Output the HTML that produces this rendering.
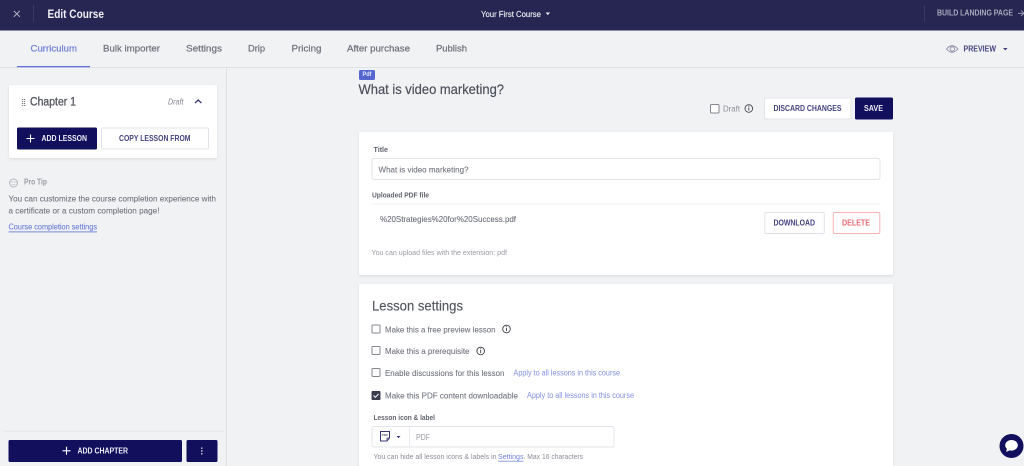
<!DOCTYPE html>
<html><head><meta charset="utf-8"><title>Edit Course</title>
<style>
html,body{margin:0;padding:0;width:1024px;height:466px;overflow:hidden;background:#f1f2f4}
svg{display:block;font-family:"Liberation Sans",sans-serif}
text{dominant-baseline:central}
.b{font-weight:700}
.tab{font-size:9.5px;fill:#6c6e7a;stroke:#6c6e7a;stroke-width:.2px}
.body{font-size:8.5px;fill:#73757f;stroke:#73757f;stroke-width:.1px}
.btn{font-size:8px;font-weight:700;fill:#45437f}
.w{font-size:8px;font-weight:700;fill:#eeeef5}
.lnk{font-size:8px;fill:#8390e2}
.cb{fill:#fff;stroke:#85868f;stroke-width:1}
</style></head><body>
<svg width="1024" height="466" viewBox="0 0 1024 466" xmlns="http://www.w3.org/2000/svg">
<defs>
<filter id="s" x="-5%" y="-5%" width="110%" height="115%"><feDropShadow dx="0" dy="1" stdDeviation="1.2" flood-color="#000" flood-opacity=".1"/></filter>
</defs>
<rect width="1024" height="466" fill="#f1f2f4"/>
<!-- header -->
<rect width="1024" height="30.5" fill="#272552"/>
<path d="M13.800 10.800l6 6M19.800 10.800l-6 6" stroke="#b9b9c8" stroke-width="1" fill="none"/>
<rect x="33" y="5" width="1" height="17" fill="#3a3863"/>
<text x="47.500" y="14" class="b" font-size="12" fill="#f0f0f5" textLength="56.500" lengthAdjust="spacingAndGlyphs">Edit Course</text>
<text x="481" y="14" font-size="8.500" fill="#ecedf3" stroke="#ecedf3" stroke-width=".15" textLength="60" lengthAdjust="spacingAndGlyphs">Your First Course</text>
<path d="M545.500 12.500h4.600l-2.300 2.600z" fill="#e8e8f0"/>
<rect x="924" y="5" width="1" height="17" fill="#3a3863"/>
<text x="937" y="13" class="b" font-size="8" fill="#aaaabd" textLength="76" lengthAdjust="spacingAndGlyphs">BUILD LANDING PAGE</text>
<path d="M1018 13.300h6M1021 10.500l3 2.800-3 2.800" stroke="#aaaabd" stroke-width=".8" fill="none"/>
<!-- tabs -->
<rect y="67" width="1024" height="1" fill="#e0e1e5"/>
<rect x="17" y="66" width="73" height="1.300" fill="#6274dc"/>
<text x="30.500" y="49" class="tab" style="fill:#6d7cd8;stroke:#6d7cd8" textLength="46.500" lengthAdjust="spacingAndGlyphs">Curriculum</text>
<text x="103" y="49" class="tab" textLength="57" lengthAdjust="spacingAndGlyphs">Bulk importer</text>
<text x="186" y="49" class="tab" textLength="36" lengthAdjust="spacingAndGlyphs">Settings</text>
<text x="248" y="49" class="tab" textLength="17" lengthAdjust="spacingAndGlyphs">Drip</text>
<text x="291.500" y="49" class="tab" textLength="30" lengthAdjust="spacingAndGlyphs">Pricing</text>
<text x="347" y="49" class="tab" textLength="63" lengthAdjust="spacingAndGlyphs">After purchase</text>
<text x="436" y="49" class="tab" textLength="31" lengthAdjust="spacingAndGlyphs">Publish</text>
<path d="M946.500 49q5.500-6.500 11.500 0q-6 6.500-11.500 0z" fill="none" stroke="#8a8ba8" stroke-width=".9"/>
<circle cx="952.300" cy="49" r="2.200" fill="none" stroke="#8a8ba8" stroke-width=".9"/>
<text x="963.500" y="49" class="btn" textLength="32.500" lengthAdjust="spacingAndGlyphs">PREVIEW</text>
<path d="M1003 48h4.600l-2.300 2.400z" fill="#3f3d7a"/>
<!-- sidebar -->
<rect x="226" y="67" width="1" height="399" fill="#e0e1e5"/>
<rect x="9" y="85" width="208" height="73" rx="1.500" fill="#fff" filter="url(#s)"/>
<path d="M22.500 99v.9M24.600 99v.9M22.500 101v.9M24.600 101v.9M22.500 103v.9M24.600 103v.9M22.500 105v.9M24.600 105v.9" stroke="#666" stroke-width="1.300"/>
<text x="30" y="102.500" font-size="11.500" fill="#55575f" stroke="#55575f" stroke-width=".3" textLength="46" lengthAdjust="spacingAndGlyphs">Chapter 1</text>
<text x="168" y="102" font-size="8" font-style="italic" fill="#85868f" textLength="15.500" lengthAdjust="spacingAndGlyphs">Draft</text>
<path d="M195 103l3.200-3 3.200 3" stroke="#3a3878" stroke-width="1.300" fill="none"/>
<rect x="17" y="127.500" width="80" height="22" rx="1.500" fill="#120f5c"/>
<path d="M26.500 138.500h8M30.500 134.500v8" stroke="#fff" stroke-width="1.100"/>
<text x="41.500" y="138.500" class="w" textLength="45.500" lengthAdjust="spacingAndGlyphs">ADD LESSON</text>
<rect x="101.500" y="128" width="107" height="21" rx="1.500" fill="#fff" stroke="#e2e3ea"/>
<text x="119" y="138.500" class="btn" textLength="71.500" lengthAdjust="spacingAndGlyphs">COPY LESSON FROM</text>
<circle cx="13.500" cy="183" r="4" fill="none" stroke="#b5b6bc" stroke-width="1"/>
<path d="M10 182h7M11.500 184.500h4" stroke="#c5c6cb" stroke-width=".8"/>
<text x="24" y="182" class="b" font-size="8" fill="#9a9ba2" textLength="23" lengthAdjust="spacingAndGlyphs">Pro Tip</text>
<text x="8.500" y="198.500" class="body" textLength="207.500" lengthAdjust="spacingAndGlyphs">You can customize the course completion experience with</text>
<text x="8.500" y="210.500" class="body" textLength="151" lengthAdjust="spacingAndGlyphs">a certificate or a custom completion page!</text>
<text x="8.500" y="227" class="lnk" style="text-decoration:underline;fill:#6f80d8;stroke:#6f80d8;stroke-width:.12px" textLength="88.500" lengthAdjust="spacingAndGlyphs">Course completion settings</text>
<rect x="4" y="430.500" width="220" height="1.500" fill="#e9eaec"/>
<rect x="8.500" y="440" width="173.500" height="22" rx="1.500" fill="#120f5c"/>
<path d="M62.500 450.800h8M66.500 446.800v8" stroke="#fff" stroke-width="1.100"/>
<text x="77.500" y="450.800" class="w" textLength="50.500" lengthAdjust="spacingAndGlyphs">ADD CHAPTER</text>
<rect x="186.500" y="440" width="31" height="22" rx="1.500" fill="#120f5c"/>
<path d="M201.800 447.500v1.300M201.800 450.300v1.300M201.800 453.100v1.300" stroke="#fff" stroke-width="1.300"/>
<!-- title -->
<rect x="359" y="70" width="16" height="10" rx="1.500" fill="#5567cf"/>
<text x="362.500" y="75" class="b" font-size="6" fill="#e8eafa" textLength="9" lengthAdjust="spacingAndGlyphs">Pdf</text>
<text x="358.500" y="89" font-size="14" fill="#4c4e5a" stroke="#4c4e5a" stroke-width=".2" textLength="145.500" lengthAdjust="spacingAndGlyphs">What is video marketing?</text>
<rect x="710.500" y="104.500" width="8.500" height="8.500" rx="1" class="cb"/>
<text x="723" y="108.500" font-size="8.500" fill="#8c8d96" textLength="17" lengthAdjust="spacingAndGlyphs">Draft</text>
<g fill="none" stroke="#44454d"><circle cx="748.800" cy="108.500" r="3.800" stroke-width=".9"/><path d="M748.800 107.500v3M748.800 105.800v1" stroke-width=".9"/></g>
<rect x="764.500" y="98" width="86.500" height="21" rx="1.500" fill="#fff" stroke="#e4e5ea"/>
<text x="773.500" y="108.500" class="btn" textLength="68" lengthAdjust="spacingAndGlyphs">DISCARD CHANGES</text>
<rect x="855" y="97.500" width="38" height="22" rx="1.500" fill="#120f5c"/>
<text x="864" y="108.500" class="w" textLength="19" lengthAdjust="spacingAndGlyphs">SAVE</text>
<!-- card 1 -->
<rect x="359" y="132" width="534" height="143" rx="1.500" fill="#fff" filter="url(#s)"/>
<text x="373.500" y="149.500" class="b" font-size="7.500" fill="#62646e" textLength="14.500" lengthAdjust="spacingAndGlyphs">Title</text>
<rect x="372" y="158.500" width="508" height="21" rx="2" fill="#fff" stroke="#e3e4ea"/>
<text x="378.500" y="169.500" class="body" textLength="90" lengthAdjust="spacingAndGlyphs">What is video marketing?</text>
<text x="372" y="195" class="b" font-size="7.500" fill="#62646e" textLength="57" lengthAdjust="spacingAndGlyphs">Uploaded PDF file</text>
<rect x="372" y="203.500" width="508" height="1" fill="#f0f1f3"/>
<text x="380" y="219" class="body" style="fill:#6a6c76" textLength="136" lengthAdjust="spacingAndGlyphs">%20Strategies%20for%20Success.pdf</text>
<rect x="764.800" y="212.500" width="59.500" height="21" rx="1.500" fill="#fff" stroke="#e2e3ea"/>
<text x="773.500" y="223" class="btn" textLength="41.500" lengthAdjust="spacingAndGlyphs">DOWNLOAD</text>
<rect x="833.300" y="212.500" width="46.500" height="21" rx="1.500" fill="#fff" stroke="#f5b5b5"/>
<text x="842" y="223" class="btn" style="fill:#e8666e" textLength="28" lengthAdjust="spacingAndGlyphs">DELETE</text>
<text x="371.500" y="252.500" font-size="7.500" fill="#9a9ba3" textLength="135.500" lengthAdjust="spacingAndGlyphs">You can upload files with the extension: pdf</text>
<!-- card 2 -->
<rect x="359" y="284" width="534" height="190" rx="1.500" fill="#fff" filter="url(#s)"/>
<text x="372" y="305.500" font-size="14" fill="#55575f" stroke="#55575f" stroke-width=".15" textLength="91" lengthAdjust="spacingAndGlyphs">Lesson settings</text>
<rect x="372" y="325" width="8" height="8" rx="1" class="cb"/>
<text x="385" y="329.500" class="body" textLength="110.500" lengthAdjust="spacingAndGlyphs">Make this a free preview lesson</text>
<g fill="none" stroke="#3b3c44" stroke-width=".9"><circle cx="506.500" cy="329" r="3.800"/><path d="M506.500 328v3M506.500 326.300v1"/></g>
<rect x="372" y="346.500" width="8" height="8" rx="1" class="cb"/>
<text x="385" y="351" class="body" textLength="84.500" lengthAdjust="spacingAndGlyphs">Make this a prerequisite</text>
<g fill="none" stroke="#3b3c44" stroke-width=".9"><circle cx="480.700" cy="351" r="3.800"/><path d="M480.700 350v3M480.700 348.300v1"/></g>
<rect x="372" y="368.500" width="8" height="8" rx="1" class="cb"/>
<text x="385" y="373" class="body" textLength="119.500" lengthAdjust="spacingAndGlyphs">Enable discussions for this lesson</text>
<text x="513.500" y="373" class="lnk" textLength="106.500" lengthAdjust="spacingAndGlyphs">Apply to all lessons in this course</text>
<rect x="371.500" y="391" width="9" height="9" rx="1" fill="#3b3d4e"/>
<path d="M373.500 395.500l1.800 1.800 3.300-3.300" stroke="#fff" stroke-width="1" fill="none"/>
<text x="385" y="395.500" class="body" textLength="133" lengthAdjust="spacingAndGlyphs">Make this PDF content downloadable</text>
<text x="527" y="395.500" class="lnk" textLength="107" lengthAdjust="spacingAndGlyphs">Apply to all lessons in this course</text>
<text x="373.500" y="417.500" class="b" font-size="7.500" fill="#62646e" textLength="61.500" lengthAdjust="spacingAndGlyphs">Lesson icon &amp; label</text>
<rect x="372" y="426.500" width="242" height="20.500" rx="2" fill="#fff" stroke="#e3e4ea"/>
<rect x="409" y="427" width="1" height="20" fill="#e8e9ee"/>
<path d="M380.500 431.500h9v6.500l-2.500 3h-6.500z" fill="none" stroke="#3a3878" stroke-width="1"/>
<path d="M387 441v-3h2.500" fill="none" stroke="#3a3878" stroke-width=".8"/>
<text x="381.700" y="435" class="b" font-size="3" fill="#55557f" textLength="6.600" lengthAdjust="spacingAndGlyphs">PDF</text>
<path d="M396.500 436h4l-2 2.300z" fill="#3a3878"/>
<text x="416" y="437" class="body" style="fill:#9a9ba3;stroke:none" textLength="14" lengthAdjust="spacingAndGlyphs">PDF</text>
<text x="373.500" y="456.300" font-size="7.500" fill="#8c8d96" textLength="123" lengthAdjust="spacingAndGlyphs">You can hide all lesson icons &amp; labels in</text>
<text x="498" y="456.300" font-size="7.500" fill="#6f80d8" style="text-decoration:underline" textLength="25.500" lengthAdjust="spacingAndGlyphs">Settings</text>
<text x="523.500" y="456.300" font-size="7.500" fill="#8c8d96" textLength="59.500" lengthAdjust="spacingAndGlyphs">. Max 16 characters</text>
<!-- chat -->
<circle cx="1011.500" cy="446" r="12" fill="#120f5c"/>
<ellipse cx="1011.500" cy="445.300" rx="6.300" ry="5.300" fill="#fff"/>
<path d="M1007 448l-.8 4 4-2z" fill="#fff"/>
</svg>
</body></html>
